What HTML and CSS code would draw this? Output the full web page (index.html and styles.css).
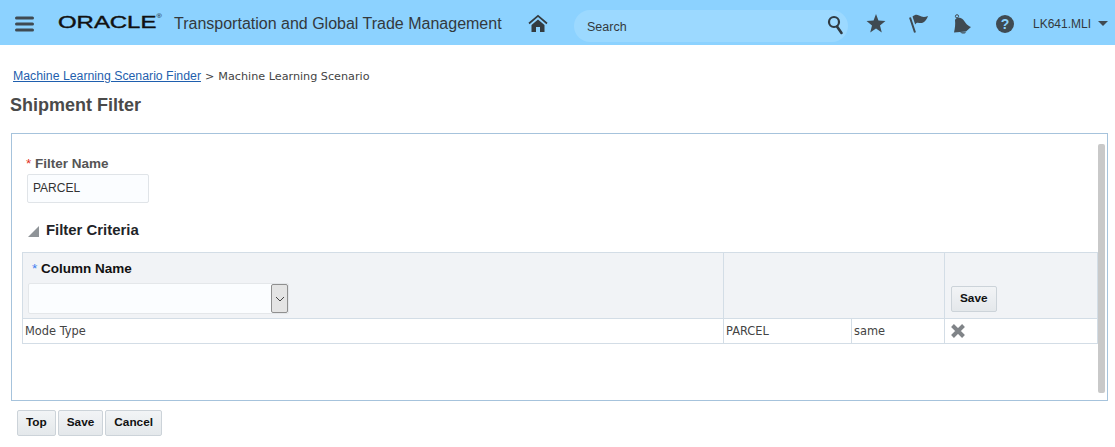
FILE: index.html
```html
<!DOCTYPE html>
<html lang="en">
<head>
<meta charset="utf-8">
<title>Shipment Filter</title>
<link rel="stylesheet" href="styles.css">
</head>
<body>
<header class="topbar">
  <svg class="icon-menu" width="20" height="16" viewBox="0 0 20 16"><path d="M1.500 2h16M1.500 8h16M1.500 14h16" stroke="#3f4a52" stroke-width="3" stroke-linecap="round" fill="none"/></svg>
  <span class="logo">ORACLE<sup class="reg">®</sup></span>
  <span class="app-title">Transportation and Global Trade Management</span>
  <svg class="icon-home" width="20" height="19" viewBox="0 0 20 19"><path d="M1 9.500 10 1.800l9 7.700" fill="none" stroke="#333b40" stroke-width="1.700"/><path d="M3.500 11 10 5.400l6.500 5.600v7h-4.500v-5H8v5H3.500z" fill="#333b40"/></svg>
  <div class="search">
    <span class="search-label">Search</span>
    <svg width="17" height="20" viewBox="0 0 17 20"><circle cx="7" cy="7" r="5" fill="none" stroke="#2f3a42" stroke-width="2.200"/><path d="M10 11.500 14.500 18" stroke="#2f3a42" stroke-width="2.600" stroke-linecap="round"/></svg>
  </div>
  <svg class="icon-star" width="20" height="19" viewBox="0 0 18 17"><path d="M9 0l2.200 5.900 6.300.4-4.900 4 1.600 6.200L9 13.100l-5.200 3.400 1.600-6.200-4.900-4 6.300-.4z" fill="#3f4a52"/></svg>
  <svg class="icon-flag" width="20" height="20" viewBox="0 0 20 20"><path d="M1 3.500 6 18.500" stroke="#3f4a52" stroke-width="2" fill="none"/><path d="M3.500 2.500C6 .5 8 .5 10 1.500c3 1.500 5 2 9 .5-1 3-3 6-6 7-2 .5-4-1-5.500 0-.5.300-1 1-1.300 1.500z" fill="#3f4a52"/></svg>
  <svg class="icon-bell" width="19" height="20" viewBox="0 0 19 20"><circle cx="4" cy="2.300" r="1.600" fill="none" stroke="#3f4a52"/><path d="M2 6C3 3.500 7.500 3 10 5.500c2.500 2.500 3 5.500 8 7.500l-5 4.500-12 1c1-4.500 1.500-8 1-12.500z" fill="#3f4a52"/><path d="M7 18.300h6c-.5 1.500-4 2-6 0z" fill="#3f4a52"/></svg>
  <span class="icon-help">?</span>
  <span class="user">LK641.MLI</span>
  <span class="caret"></span>
</header>

<nav class="crumbs"><a href="#">Machine Learning Scenario Finder</a><span class="sep">&gt;</span><span>Machine Learning Scenario</span></nav>
<h1 class="page-title">Shipment Filter</h1>

<main class="panel">
  <div class="scrollbar"></div>
  <label class="field-label"><span class="req-red">*</span> Filter Name</label>
  <input class="text-input" type="text" value="PARCEL">
  <h2 class="section"><span class="disclosure"></span>Filter Criteria</h2>
  <table class="grid">
    <colgroup><col class="c1"><col class="c2"><col class="c3"><col class="c4"></colgroup>
    <tr class="head">
      <th>
        <div class="col-label"><span class="req-blue">*</span> Column Name</div>
        <div class="select"><span class="select-btn"><svg width="10" height="6" viewBox="0 0 10 6"><path d="M1 1l4 4 4-4" fill="none" stroke="#444" stroke-width="1"/></svg></span></div>
      </th>
      <th colspan="2"></th>
      <th class="save-cell"><button class="btn btn-block" type="button">Save</button></th>
    </tr>
    <tr class="row">
      <td>Mode Type</td>
      <td>PARCEL</td>
      <td>same</td>
      <td><svg class="icon-x" width="16" height="16" viewBox="0 0 16 16"><path d="M2.500 2.500l11 11M13.500 2.500l-11 11" stroke="#808488" stroke-width="4" fill="none"/></svg></td>
    </tr>
  </table>
</main>

<footer class="actions">
  <button class="btn" type="button">Top</button>
  <button class="btn" type="button">Save</button>
  <button class="btn" type="button">Cancel</button>
</footer>
</body>
</html>
```
FILE: styles.css
```css
* { box-sizing: border-box; }
html, body { margin: 0; height: 100%; }
body { background: #fff; font-family: "Liberation Sans", Arial, sans-serif; color: #333; overflow: hidden; }

.topbar { height: 45px; padding-top: 2px; background: #8cd2ff; display: flex; align-items: center; }
.icon-menu { margin-left: 15px; flex: none; }
.logo { margin-left: 23px; width: 104px; font-size: 16.500px; line-height: 1; color: #111; white-space: nowrap; transform: translateY(-1px) scaleX(1.45); transform-origin: left; -webkit-text-stroke: .4px #111; }
.reg { font-size: 5px; vertical-align: top; -webkit-text-stroke: 0; }
.app-title { margin-left: 12px; width: 329px; font-size: 16px; color: #33393d; white-space: nowrap; }
.icon-home { margin-left: 25px; flex: none; }
.search { align-self: flex-start; margin: 8px 0 0 26px; width: 274px; height: 32px; padding: 0 4px 3px 13px; border-radius: 16px; background: #9cd9ff; display: flex; align-items: center; justify-content: space-between; }
.search-label { margin-top: 5px; font-size: 12.500px; color: #33393d; }
.icon-star { margin-left: 18px; flex: none; }
.icon-flag { margin-left: 23px; flex: none; }
.icon-bell { margin-left: 24px; flex: none; }
.icon-help { margin-left: 24px; width: 18px; height: 18px; border-radius: 50%; background: #3f4a52; color: #8cd2ff; font-size: 14px; font-weight: 700; line-height: 18px; text-align: center; flex: none; }
.user { margin-left: 19px; font-size: 12px; color: #33393d; }
.caret { margin-left: 7px; width: 0; height: 0; border: 5px solid transparent; border-top: 5px solid #3f4a52; border-bottom: 0; }

.crumbs { margin: 25px 0 0 13px; height: 12px; font-family: "DejaVu Sans", Verdana, sans-serif; font-size: 11.200px; line-height: 12px; color: #444; white-space: nowrap; }
.crumbs a { font-family: "Liberation Sans", Arial, sans-serif; font-size: 12.300px; color: #1f5fae; }
.sep { margin: 0 4px; }
.page-title { margin: 14px 0 0 10px; font-size: 18px; line-height: 18px; font-weight: 700; color: #4a4a4a; }

.panel { position: relative; margin: 19px 0 0 11px; width: 1097px; height: 268px; border: 1px solid #a6c3dc; padding: 22px 0 0 10px; }
.scrollbar { position: absolute; top: 10px; right: 2px; width: 7px; height: 249px; background: #c9c9c9; border-radius: 2px; }
.field-label { display: block; margin-left: 4px; font-size: 13.500px; line-height: 16px; font-weight: 700; color: #555; }
.req-red { color: #e0301e; font-weight: 400; }
.req-blue { color: #3b7bf0; font-weight: 400; }
.text-input { display: block; margin: 2px 0 0 5px; width: 122px; height: 29px; padding: 0 5px 2px; border: 1px solid #e0e4e8; border-radius: 2px; background: #fbfdff; font-family: "Liberation Sans", Arial, sans-serif; font-size: 12px; color: #333; }
.section { display: flex; align-items: center; margin: 19px 0 0 6px; height: 16px; font-size: 14.900px; font-weight: 700; color: #1f2428; }
.disclosure { width: 0; height: 0; margin: 3px 7px 0 0; border-style: solid; border-width: 0 0 11px 11px; border-color: transparent transparent #8f9498 transparent; }

.grid { margin-top: 14px; width: 1075px; border-collapse: collapse; table-layout: fixed; }
.c1 { width: 701px; } .c2 { width: 128px; } .c3 { width: 93px; } .c4 { width: 153px; }
.grid th, .grid td { border: 1px solid #d3dde6; padding: 0; text-align: left; }
.head th { height: 66px; background: #f1f3f6; vertical-align: top; }
.col-label { margin: 8px 0 0 9px; font-size: 13.500px; line-height: 16px; font-weight: 700; color: #111; }
.select { margin: 6px 0 0 5px; width: 261px; height: 31px; background: #fbfdff; border: 1px solid #e4e7ea; border-radius: 2px; display: flex; justify-content: flex-end; }
.select-btn { width: 17px; height: 29px; background: #e4e4e4; border: 1px solid #8f8f8f; border-radius: 2px; display: flex; align-items: center; justify-content: center; }
.head .save-cell { vertical-align: bottom; padding: 0 0 6px 6px; }
.row td { height: 25px; padding-left: 2px; font-family: "DejaVu Sans", Verdana, sans-serif; font-size: 11.400px; color: #444; }
.icon-x { display: block; margin-left: 3px; }

.btn { height: 26px; padding: 0 8px 2px; border: 1px solid #ccd3d9; border-radius: 2px; background: linear-gradient(#f2f4f6, #e4e8eb); font-family: "Liberation Sans", Arial, sans-serif; font-size: 11.800px; font-weight: 700; color: #111; }
.btn-block { display: block; }
.actions { display: flex; gap: 2px; margin: 9px 0 0 17px; }
```
